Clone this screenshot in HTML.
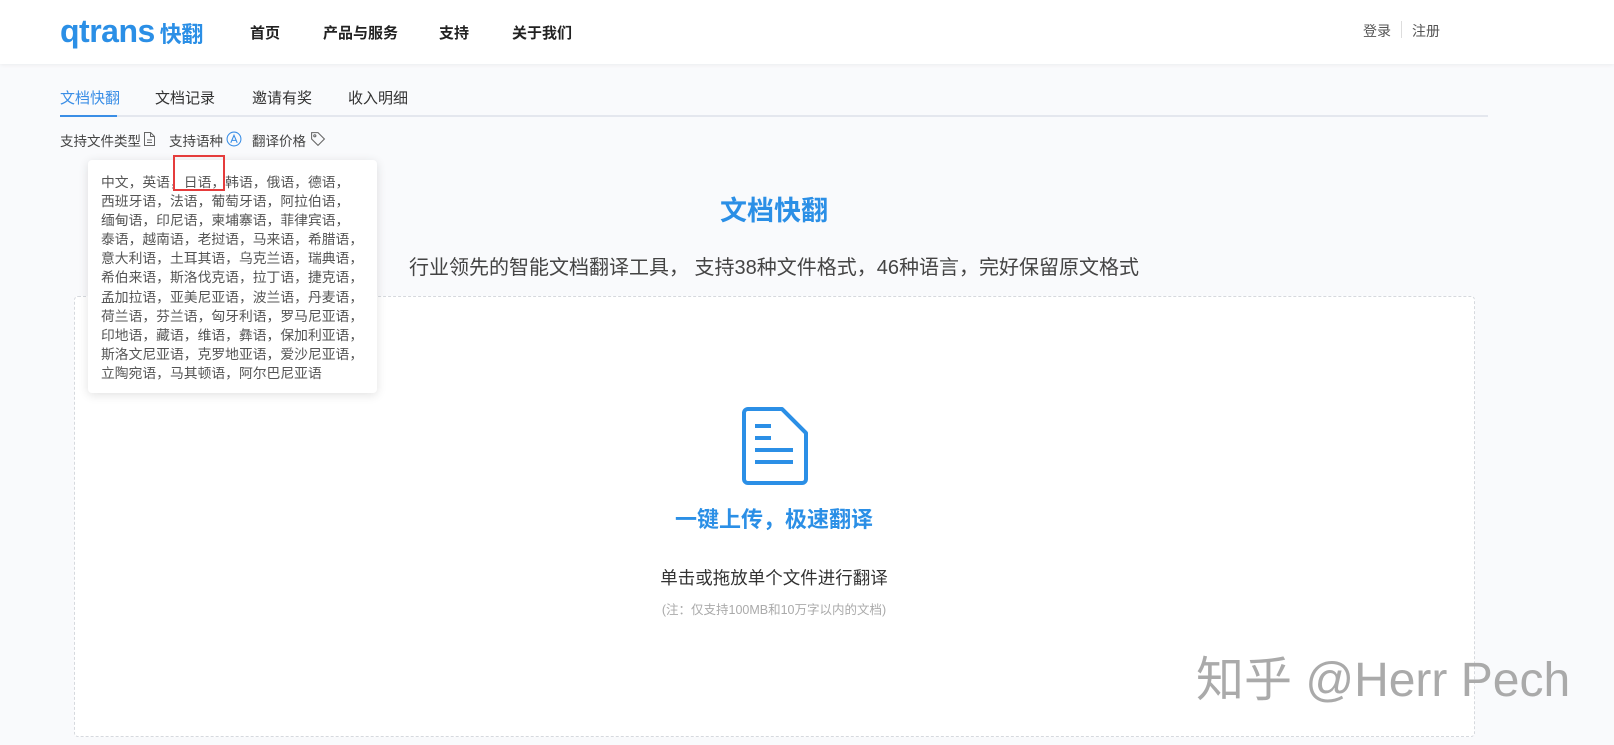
<!DOCTYPE html>
<html><head><meta charset="utf-8"><style>
*{margin:0;padding:0;box-sizing:border-box}
body{width:1614px;height:745px;overflow:hidden;background:#f9fafc;font-family:"Liberation Sans","Noto Sans CJK SC",sans-serif;position:relative;color:#333}
.hdr{position:absolute;left:0;top:0;width:1614px;height:64px;background:#fff;box-shadow:0 1px 4px rgba(0,0,0,.06)}
.logo{position:absolute;left:60px;top:13px;color:#2b8fe6;font-weight:bold;font-size:32px;letter-spacing:-0.5px}
.logo span{font-size:22px;margin-left:5px}
.nav{position:absolute;top:22px;font-size:15px;font-weight:bold;color:#222}
.lr{position:absolute;top:21px;font-size:14px;color:#555}
.tab{position:absolute;top:87px;font-size:15px;color:#333}
.line{position:absolute;left:60px;top:115px;width:1428px;height:2px;background:#e4e7ee}
.act{position:absolute;left:60px;top:115px;width:57px;height:2px;background:#3a8ee6}
.sub{position:absolute;top:130px;font-size:13.5px;color:#444}
.box{position:absolute;left:74px;top:296px;width:1401px;height:441px;border:1px dashed #d6d9de;background:#fff;border-radius:4px}
.pop{position:absolute;left:88px;top:160px;width:289px;height:233px;background:#fff;border-radius:4px;box-shadow:0 2px 10px rgba(0,0,0,.12);padding:13px 0 0 13px;font-size:13.8px;line-height:19.1px;color:#555;white-space:nowrap}
.red{position:absolute;left:173px;top:155px;width:52px;height:36px;border:2px solid #e53c3c}
.c{position:absolute;left:-33px;width:1614px;text-align:center}
</style></head><body>
<div class="hdr">
<div class="logo">qtrans<span>快翻</span></div>
<div class="nav" style="left:250px">首页</div>
<div class="nav" style="left:323px">产品与服务</div>
<div class="nav" style="left:439px">支持</div>
<div class="nav" style="left:512px">关于我们</div>
<div class="lr" style="left:1363px">登录</div>
<div style="position:absolute;left:1401px;top:21px;width:1px;height:17px;background:#ddd"></div>
<div class="lr" style="left:1412px">注册</div>
</div>
<div class="tab" style="left:60px;color:#3a8ee6">文档快翻</div>
<div class="tab" style="left:155px">文档记录</div>
<div class="tab" style="left:252px">邀请有奖</div>
<div class="tab" style="left:348px">收入明细</div>
<div class="line"></div><div class="act"></div>
<div class="sub" style="left:60px">支持文件类型</div>
<svg style="position:absolute;left:143px;top:131px" width="13" height="16" viewBox="0 0 13 16" fill="none" stroke="#666" stroke-width="1"><path d="M1.5 1.5h6l4 4v9h-10z M7.5 1.5v4h4 M4 9h5 M4 11.5h5"/></svg>
<div class="sub" style="left:169px">支持语种</div>
<svg style="position:absolute;left:226px;top:131px" width="16" height="16" viewBox="0 0 15 15" fill="none" stroke="#3a8ee6" stroke-width="1"><circle cx="7.5" cy="7.5" r="6.5"/><path d="M4.5 11l3-7 3 7 M5.5 8.8h4"/></svg>
<div class="sub" style="left:252px">翻译价格</div>
<svg style="position:absolute;left:310px;top:131px" width="16" height="16" viewBox="0 0 15 15" fill="none" stroke="#666" stroke-width="1"><path d="M1.5 1.5h6l6 6-6 6-6-6z"/><circle cx="4.5" cy="4.5" r="1"/></svg>
<div class="box"></div>
<div class="c" style="top:189px;font-size:27px;font-weight:bold;color:#2b8fe6">文档快翻</div>
<div class="c" style="top:251px;font-size:20px;color:#444">行业领先的智能文档翻译工具， 支持38种文件格式，46种语言，完好保留原文格式</div>
<svg style="position:absolute;left:741px;top:406px" width="68" height="80" viewBox="0 0 68 80" fill="none" stroke="#2b8fe6" stroke-width="4" stroke-linejoin="round"><path d="M7 3h34l24 24v46a4 4 0 0 1-4 4H7a4 4 0 0 1-4-4V7a4 4 0 0 1 4-4z"/><path d="M41 3l24 24" /><path d="M14 20h16 M14 32h16 M14 44h38 M14 56h38"/></svg>
<div class="c" style="top:502px;font-size:22px;font-weight:bold;color:#2b8fe6">一键上传，极速翻译</div>
<div class="c" style="top:565px;font-size:17.5px;color:#333">单击或拖放单个文件进行翻译</div>
<div class="c" style="top:599px;font-size:12.5px;color:#aaa">(注：仅支持100MB和10万字以内的文档)</div>
<div style="position:absolute;left:1196px;top:640px;font-size:48px;color:#aaa;font-family:'Liberation Sans','Noto Sans CJK SC',sans-serif;white-space:nowrap">知乎 @Herr Pech</div>
<div class="pop">中文，英语，日语，韩语，俄语，德语，<br>西班牙语，法语，葡萄牙语，阿拉伯语，<br>缅甸语，印尼语，柬埔寨语，菲律宾语，<br>泰语，越南语，老挝语，马来语，希腊语，<br>意大利语，土耳其语，乌克兰语，瑞典语，<br>希伯来语，斯洛伐克语，拉丁语，捷克语，<br>孟加拉语，亚美尼亚语，波兰语，丹麦语，<br>荷兰语，芬兰语，匈牙利语，罗马尼亚语，<br>印地语，藏语，维语，彝语，保加利亚语，<br>斯洛文尼亚语，克罗地亚语，爱沙尼亚语，<br>立陶宛语，马其顿语，阿尔巴尼亚语</div>
<div class="red"></div>
</body></html>
